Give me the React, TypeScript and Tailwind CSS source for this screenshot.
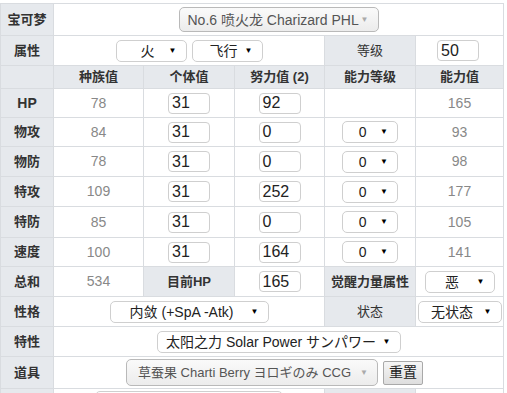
import React from 'react';

const font = { fontFamily: '"Liberation Sans", "Noto Sans CJK SC", sans-serif' };

function Cell({ head, span, children, className = '' }: { head?: boolean; span?: string; children?: React.ReactNode; className?: string }) {
  return (
    <div className={`flex items-center justify-center whitespace-nowrap ${head ? 'bg-[#e6e9ed] font-bold text-[#333]' : 'bg-white'} ${span ?? ''} ${className}`}>
      {children}
    </div>
  );
}

function Select({ label, w, gray, className = '' }: { label: string; w: string; gray?: boolean; className?: string }) {
  return (
    <div
      className={`flex shrink-0 items-center whitespace-nowrap rounded-[5px] border pl-2 pr-[9px] ${w} ${
        gray ? 'h-[25px] border-[#b9b9b9] bg-gradient-to-b from-[#fafafa] to-[#ececec] text-[#555]' : 'h-[22px] border-[#cfcfcf] bg-white text-[#222]'
      } ${className}`}
    >
      <span className="min-w-0 flex-1 text-center leading-none">{label}</span>
      <span className={gray ? 'ml-[6px] shrink-0 text-[8px] text-[#aaa]' : 'ml-[6px] shrink-0 text-[8px] text-black'}>▼</span>
    </div>
  );
}

function NumInput({ value }: { value: string }) {
  return (
    <div className="flex h-[21px] w-[42px] items-center rounded-[4px] border border-[#cfcfcf] bg-white pl-[3px] text-[16px] leading-none text-[#222]">
      {value}
    </div>
  );
}

const stats = [
  { name: 'HP', base: 78, iv: '31', ev: '92', stage: false, value: 165 },
  { name: '物攻', base: 84, iv: '31', ev: '0', stage: true, value: 93 },
  { name: '物防', base: 78, iv: '31', ev: '0', stage: true, value: 98 },
  { name: '特攻', base: 109, iv: '31', ev: '252', stage: true, value: 177 },
  { name: '特防', base: 85, iv: '31', ev: '0', stage: true, value: 105 },
  { name: '速度', base: 100, iv: '31', ev: '164', stage: true, value: 141 },
];

export default function App() {
  return (
    <div className="h-[393px] w-[507px] overflow-hidden bg-white pt-[3px] text-[13px] text-[#333]" style={font}>
      <div className="grid w-[504px] grid-cols-[52px_89px_90px_89px_90px_87px] grid-rows-[31px_29px_22px_28px_28px_29px_29px_30px_28px_29px_29px_29px_31px_30px] gap-px border border-[#d9dce0] bg-[#d9dce0]">
        <Cell head>宝可梦</Cell>
        <Cell span="col-span-5">
          <Select label="No.6 喷火龙 Charizard PHL" w="w-[200px]" gray className="text-[14px]" />
        </Cell>

        <Cell head>属性</Cell>
        <Cell span="col-span-3" className="gap-[5px] text-[14px]">
          <Select label="火" w="w-[71px]" className="pl-4" />
          <Select label="飞行" w="w-[71px]" className="pl-4" />
        </Cell>
        <Cell head className="font-normal">等级</Cell>
        <Cell>
          <div className="ml-[-3px]">
            <NumInput value="50" />
          </div>
        </Cell>

        <Cell head />
        <Cell head>种族值</Cell>
        <Cell head>个体值</Cell>
        <Cell head>努力值 (2)</Cell>
        <Cell head>能力等级</Cell>
        <Cell head>能力值</Cell>

        {stats.map((s) => (
          <React.Fragment key={s.name}>
            <Cell head className={s.name === 'HP' ? 'text-[14px]' : ''}>{s.name}</Cell>
            <Cell className="text-[14px] text-[#888]">{s.base}</Cell>
            <Cell><NumInput value={s.iv} /></Cell>
            <Cell><NumInput value={s.ev} /></Cell>
            <Cell className="text-[14px]">{s.stage && <Select label="0" w="w-[56px]" />}</Cell>
            <Cell className="text-[14px] text-[#888]">{s.value}</Cell>
          </React.Fragment>
        ))}

        <Cell head>总和</Cell>
        <Cell className="text-[14px] text-[#888]">534</Cell>
        <Cell head>目前HP</Cell>
        <Cell><NumInput value="165" /></Cell>
        <Cell head>觉醒力量属性</Cell>
        <Cell className="text-[14px]"><Select label="恶" w="w-[70px]" /></Cell>

        <Cell head>性格</Cell>
        <Cell span="col-span-3" className="text-[14px]">
          <Select label="内敛 (+SpA -Atk)" w="w-[159px]" />
        </Cell>
        <Cell head className="font-normal">状态</Cell>
        <Cell className="text-[14px]"><Select label="无状态" w="w-[84px]" /></Cell>

        <Cell head>特性</Cell>
        <Cell span="col-span-5" className="text-[14px]">
          <Select label="太阳之力 Solar Power サンパワー" w="w-[244px]" />
        </Cell>

        <Cell head>道具</Cell>
        <Cell span="col-span-5" className="gap-[5px] pr-[8px]">
          <Select label="草蚕果 Charti Berry ヨロギのみ CCG" w="w-[252px]" gray className="h-[27px] text-[13px]" />
          <button className="h-[24px] rounded-[2px] border border-[#a9a9a9] bg-gradient-to-b from-[#f6f6f6] to-[#dedede] px-[5px] text-[14px] text-[#222]">
            重置
          </button>
        </Cell>

        <Cell head />
        <Cell span="col-span-3" className="items-start pt-[2px]">
          <div className="h-[22px] w-[188px] rounded-[5px] border border-[#cfcfcf] bg-white" />
        </Cell>
        <Cell head />
        <Cell />
      </div>
    </div>
  );
}
